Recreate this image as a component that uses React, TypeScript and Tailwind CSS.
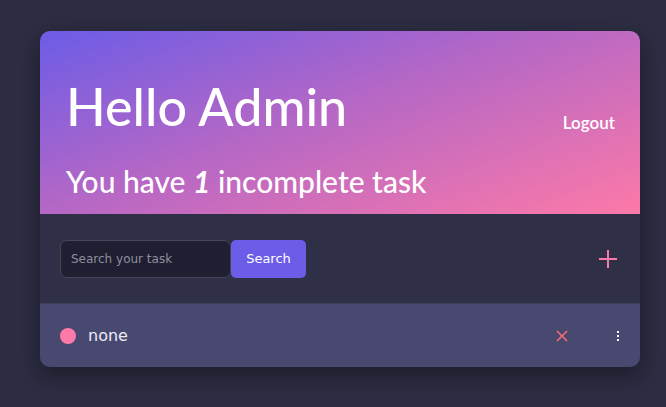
import React from "react";

export default function App() {
  return (
    <div className="min-h-[407px] w-full bg-[#2c2c42] pt-[31px] pl-[40px]" style={{ fontFamily: "Lato, 'Open Sans', sans-serif" }}>
      <div className="w-[600px] overflow-hidden rounded-[10px] bg-[#2f2f48] shadow-[0_8px_20px_rgba(0,0,0,0.35)]">
        <div className="h-[183px] bg-[linear-gradient(160deg,#6c5ce7_0%,#b467c6_45%,#fd79a8_100%)] px-[26px] pt-[45px] text-white">
          <div className="flex items-center justify-between">
            <h1 className="text-[52px] font-medium leading-[58px]">Hello Admin</h1>
            <button type="button" className="mr-[-1px] mt-[34px] text-[17px] font-semibold">Logout</button>
          </div>
          <p className="mt-[27px] text-[30px] font-medium leading-[36px]">
            You have <em className="font-bold">1</em> incomplete task
          </p>
        </div>

        <div className="flex h-[89px] items-center justify-between pl-[20px] pr-[22px]">
          <div className="flex items-center" style={{ fontFamily: "'DejaVu Sans', sans-serif" }}>
            <input
              placeholder="Search your task"
              className="h-[38px] w-[171px] rounded-[7px] border border-[#46465a] bg-[#1f1f31] px-[10px] text-[12px] text-white placeholder:text-[#8e8e9e] outline-none"
            />
            <button type="button" className="h-[38px] w-[75px] rounded-[5px] bg-[#6c5ce7] text-[13px] text-white">
              Search
            </button>
          </div>
          <svg width="20" height="20" viewBox="0 0 20 20" className="text-[#fd79a8]">
            <path d="M10 1v18M1 10h18" stroke="currentColor" strokeWidth="2" />
          </svg>
        </div>

        <div className="flex h-[64px] items-center border-t border-[#3d3d5c] bg-[#484870] pl-[20px] pr-[20px]">
          <span className="h-[16px] w-[16px] rounded-full bg-[#fd79a8]" />
          <span className="ml-[12px] text-[16px] text-[#ececf4]" style={{ fontFamily: "'DejaVu Sans', sans-serif" }}>none</span>
          <div className="ml-auto flex items-center gap-[49px]">
            <svg width="12" height="12" viewBox="0 0 12 12" className="text-[#ff7675]">
              <path d="M1 1l10 10M11 1L1 11" stroke="currentColor" strokeWidth="1.4" />
            </svg>
            <div className="flex flex-col items-center gap-[2px] pr-[1px]">
              <span className="h-[2px] w-[2px] bg-white" />
              <span className="h-[2px] w-[2px] bg-white" />
              <span className="h-[2px] w-[2px] bg-white" />
            </div>
          </div>
        </div>
      </div>
    </div>
  );
}
